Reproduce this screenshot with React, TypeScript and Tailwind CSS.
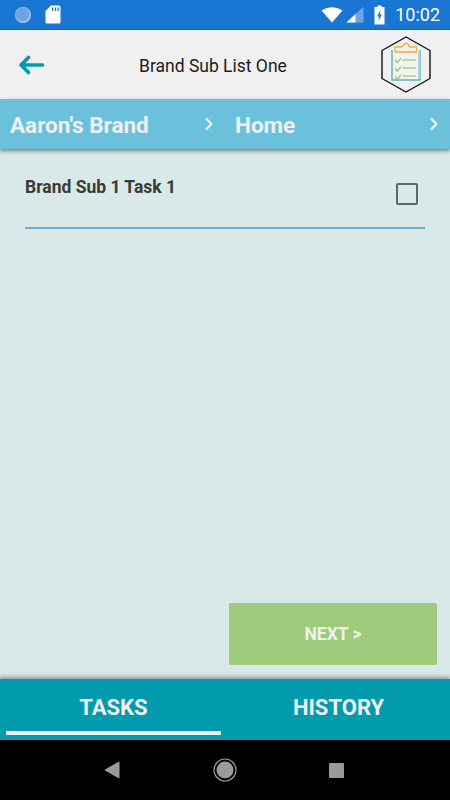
import React from "react";

function Chevron() {
  return (
    <svg width="10" height="14" viewBox="0 0 10 14" fill="none" stroke="#f0f0f0" strokeWidth="2.2" strokeLinecap="round" strokeLinejoin="round">
      <path d="M2.5 2 L7.5 7 L2.5 12" />
    </svg>
  );
}

function Logo() {
  return (
    <svg width="50" height="58" viewBox="0 0 50 58" fill="none">
      <path d="M25 1 L49 14.500 L49 42.500 L25 56 L1 42.500 L1 14.500 Z" stroke="#111" strokeWidth="1.4" strokeLinejoin="round" />
      <path d="M11 14 V44 H39 V14" stroke="#5fb0b8" strokeWidth="1.400" fill="#f1f4f2" />
      <path d="M38 15 V43" stroke="#b5d3d6" strokeWidth="2" />
      <path d="M14 11 H21 L23 8.500 Q25 6 27 8.500 L29 11 H35.500 V16 H14 Z" fill="#f5f0e4" stroke="#f0ab45" strokeWidth="1.300" />
      <path d="M14 24 L16.500 26.500 L20 22 M14 32.500 L16.500 35 L20 30.500 M14 40.500 L16.500 43 L20 38.500" stroke="#8cc46c" strokeWidth="1.200" />
      <path d="M21.500 24 H35 M21.500 32 H35 M21.500 40 H35" stroke="#a6cf8d" strokeWidth="1.300" />
    </svg>
  );
}

export default function App() {
  return (
    <div className="w-[450px] h-[800px] flex flex-col overflow-hidden bg-[#d9e8e8] font-['Roboto',sans-serif]">
      <div className="h-[30px] shrink-0 bg-[#1976d2] border-b border-[#1565c0] flex items-center pl-[14px] pr-[10px]">
        <svg width="18" height="18" viewBox="0 0 18 18">
          <circle cx="9" cy="9" r="8" fill="#a9c9ee" />
          <circle cx="8.500" cy="8.500" r="7" fill="#6fa3e4" />
        </svg>
        <svg width="16" height="19" viewBox="0 0 16 19" className="ml-[13px]">
          <path d="M6 0.500 H14 Q15.500 0.500 15.500 2 V17 Q15.500 18.500 14 18.500 H2 Q0.500 18.500 0.500 17 V6 Z" fill="#fff" />
          <path d="M7 2.500 h1.300 v3.500 h-1.300 z M9.800 2.500 h1.300 v3.500 h-1.300 z M12.500 2.500 h1.300 v3.500 h-1.300 z" fill="#1976d2" />
        </svg>
        <div className="ml-auto flex items-center">
          <svg width="22" height="16" viewBox="0 0 22 16"><path d="M0.500 3.500 Q11 -3 21.500 3.500 L11 15.500 Z" fill="#fff" /></svg>
          <svg width="18" height="17" viewBox="0 0 18 17" className="ml-[3px]">
            <path d="M0.500 16.500 L17.500 0.500 V16.500 Z" fill="#6fa3e4" />
            <path d="M0.500 16.500 L9.500 8 V16.500 Z" fill="#fff" />
          </svg>
          <svg width="11" height="20" viewBox="0 0 11 20" className="ml-[10px]">
            <path d="M3.500 0.500 H7.500 V2 H10.500 V19.500 H0.500 V2 H3.500 Z" fill="#fff" />
            <path d="M6.500 5 L3 11.500 H5 L4.500 16 L8 9.500 H6 Z" fill="#1976d2" />
          </svg>
          <span className="ml-[10px] text-[18px] leading-none text-white">10:02</span>
        </div>
      </div>

      <div className="h-[69px] shrink-0 bg-[#f0f0f0] flex items-center pl-[18px] pr-[19px]">
        <svg width="27" height="20" viewBox="0 0 27 20" fill="none" stroke="#059aab" strokeWidth="3.600" strokeLinecap="round" strokeLinejoin="round">
          <path d="M24.500 10 H3 M10.500 2.500 L3 10 L10.500 17.500" />
        </svg>
        <span className="ml-[94px] mt-[3px] text-[17.5px] text-[#1c1c1c]">Brand Sub List One</span>
        <div className="ml-auto mt-[1px]"><Logo /></div>
      </div>

      <div className="h-[50px] shrink-0 bg-[#6bc1dc] flex items-center shadow-[0_2px_4px_rgba(0,0,0,0.45)] relative">
        <div className="w-[225px] flex items-center justify-between pl-[10px] pr-[11px]">
          <span className="mt-[4px] text-[22.5px] font-bold text-[#f0f0f0]">Aaron's Brand</span>
          <Chevron />
        </div>
        <div className="flex-1 flex items-center justify-between pl-[10px] pr-[11px]">
          <span className="mt-[4px] text-[22.5px] font-bold text-[#f0f0f0]">Home</span>
          <Chevron />
        </div>
      </div>

      <div className="flex-1 flex flex-col px-[25px] pt-[27px]">
        <div className="h-[53px] border-b-2 border-[#6aaed6] flex items-start justify-between">
          <span className="mt-[1px] text-[17.5px] leading-[20px] font-bold text-[#3a3a32]">Brand Sub 1 Task 1</span>
          <div className="w-[22px] h-[22px] mt-[7px] mr-[7px] border-[2.5px] border-[#5f6668] rounded-[2px]" />
        </div>
        <div className="mt-auto mb-[14px] -mr-[12px] self-end w-[208px] h-[62px] bg-[#9ccc7c] rounded-[2px] flex items-center justify-center">
          <span className="text-[17.5px] font-bold text-[#f0f0f0]">NEXT &gt;</span>
        </div>
      </div>

      <div className="h-[61px] shrink-0 bg-[#029bad] shadow-[0_-2px_4px_rgba(0,0,0,0.35)] flex relative">
        <div className="w-[227px] px-[6px] flex flex-col items-center">
          <span className="mt-[15px] text-[22px] leading-[28px] font-bold text-[#f0f0f0]">TASKS</span>
          <div className="mt-[9px] w-full h-[4px] bg-[#f0f0f0]" />
        </div>
        <div className="flex-1 flex justify-center">
          <span className="mt-[15px] text-[22px] leading-[28px] font-bold text-[#f0f0f0]">HISTORY</span>
        </div>
      </div>

      <div className="h-[60px] shrink-0 bg-black flex items-center pl-[104px]">
        <svg width="16" height="18" viewBox="0 0 16 18"><path d="M1 9 L15 1 V17 Z" fill="#9a9a9a" stroke="#9a9a9a" strokeLinejoin="round" /></svg>
        <svg width="24" height="24" viewBox="0 0 24 24" className="ml-[93px]">
          <circle cx="12" cy="12" r="11" fill="none" stroke="#9a9a9a" strokeWidth="1.200" />
          <circle cx="12" cy="12" r="8.500" fill="#9a9a9a" />
        </svg>
        <div className="ml-[92px] w-[15px] h-[15px] bg-[#9a9a9a] rounded-[1px]" />
      </div>
    </div>
  );
}
